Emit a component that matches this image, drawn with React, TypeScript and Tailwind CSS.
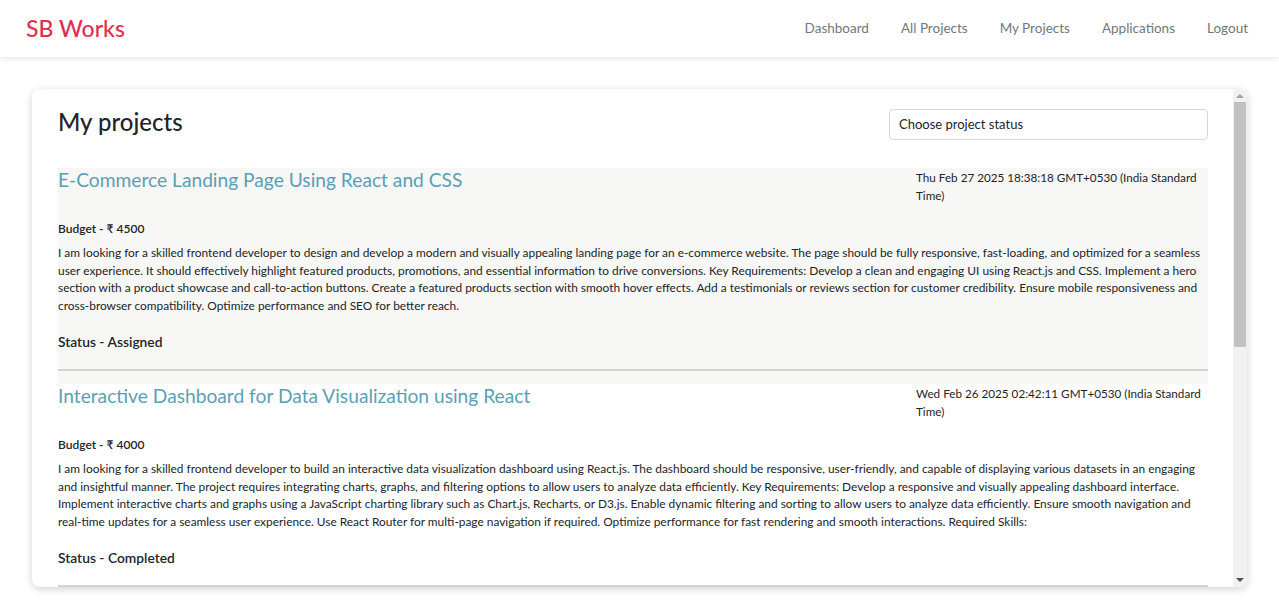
import { useState } from "react";

type Project = {
  id: number;
  title: string;
  date: string;
  budget: number;
  description: string;
  status: string;
};

const projects: Project[] = [
  {
    id: 1,
    title: "E-Commerce Landing Page Using React and CSS",
    date: "Thu Feb 27 2025 18:38:18 GMT+0530 (India Standard Time)",
    budget: 4500,
    description:
      "I am looking for a skilled frontend developer to design and develop a modern and visually appealing landing page for an e-commerce website. The page should be fully responsive, fast-loading, and optimized for a seamless user experience. It should effectively highlight featured products, promotions, and essential information to drive conversions. Key Requirements: Develop a clean and engaging UI using React.js and CSS. Implement a hero section with a product showcase and call-to-action buttons. Create a featured products section with smooth hover effects. Add a testimonials or reviews section for customer credibility. Ensure mobile responsiveness and cross-browser compatibility. Optimize performance and SEO for better reach.",
    status: "Assigned",
  },
  {
    id: 2,
    title: "Interactive Dashboard for Data Visualization using React",
    date: "Wed Feb 26 2025 02:42:11 GMT+0530 (India Standard Time)",
    budget: 4000,
    description:
      "I am looking for a skilled frontend developer to build an interactive data visualization dashboard using React.js. The dashboard should be responsive, user-friendly, and capable of displaying various datasets in an engaging and insightful manner. The project requires integrating charts, graphs, and filtering options to allow users to analyze data efficiently. Key Requirements: Develop a responsive and visually appealing dashboard interface. Implement interactive charts and graphs using a JavaScript charting library such as Chart.js, Recharts, or D3.js. Enable dynamic filtering and sorting to allow users to analyze data efficiently. Ensure smooth navigation and real-time updates for a seamless user experience. Use React Router for multi-page navigation if required. Optimize performance for fast rendering and smooth interactions. Required Skills:",
    status: "Completed",
  },
];

const navLinks = ["Dashboard", "All Projects", "My Projects", "Applications", "Logout"];

export default function App() {
  const [filter, setFilter] = useState("");
  const [hovered, setHovered] = useState<number | null>(1);

  const visible = projects.filter((p) => !filter || p.status === filter);

  return (
    <div className="h-[603px] bg-white font-['Lato','Liberation_Sans',sans-serif] text-[#212529] overflow-hidden">
      {/* Navbar */}
      <nav className="h-[57px] flex items-center justify-between pl-[26px] pr-[31px] bg-white shadow-[0_1px_6px_rgba(0,0,0,0.12)] relative z-10">
        <span className="text-[23px] font-medium text-[#e0304f] leading-none">SB Works</span>
        <div className="flex items-center gap-[32px]">
          {navLinks.map((l) => (
            <a key={l} className="text-[13.5px] text-[#73777b] cursor-pointer">
              {l}
            </a>
          ))}
        </div>
      </nav>

      {/* Card */}
      <div className="mx-[32px] mt-[32px] h-[498px] rounded-lg bg-white shadow-[0_2px_8px_rgba(0,0,0,0.18)] overflow-hidden flex">
        <div className="flex-1 min-w-0 overflow-hidden">
          <div className="pl-[26px] pr-[25px] pt-[17px] pb-[26px]">
            <div className="flex items-start justify-between">
              <h2 className="text-[24px] font-medium leading-[30px] mt-[1px]">My projects</h2>
              <select
                value={filter}
                onChange={(e) => setFilter(e.target.value)}
                className="appearance-none w-[319px] h-[31px] mt-[3px] border border-[#d6d9dc] rounded-[4px] pl-[9px] text-[13px] text-[#212529] bg-white outline-none"
              >
                <option value="">Choose project status</option>
                <option value="Assigned">Assigned</option>
                <option value="Completed">Completed</option>
              </select>
            </div>

            <div className="mt-[28px]">
              {visible.map((p) => (
                <div
                  key={p.id}
                  onMouseEnter={() => setHovered(p.id)}
                  className={`pb-[13px] ${hovered === p.id ? "bg-[#f7f7f5]" : "bg-white"}`}
                >
                  <div className="flex justify-between items-start">
                    <h3 className="text-[19.2px] leading-[24px] text-[#5b9fb5] font-normal">{p.title}</h3>
                    <p className="w-[292px] shrink-0 text-[11.7px] leading-[18px] text-[#212529]">{p.date}</p>
                  </div>
                  <p className="mt-[16px] text-[12px] leading-[18px] font-semibold">Budget - &#8377; {p.budget}</p>
                  <p className="mt-[6px] text-[11.9px] leading-[17.7px] text-[#212529]">{p.description}</p>
                  <p className="mt-[17px] text-[13.8px] leading-[20px] font-semibold">Status - {p.status}</p>
                  <hr className="mt-[17px] border-0 border-t-2 border-[#d3d3d3]" />
                </div>
              ))}
            </div>
          </div>
        </div>

        {/* Scrollbar */}
        <div className="w-[14px] shrink-0 bg-[#f1f1f1] flex flex-col items-center">
          <div className="h-[13px] w-full flex items-center justify-center">
            <svg width="8" height="4" viewBox="0 0 8 4">
              <path d="M0 4 L4 0 L8 4 Z" fill="#a3a3a3" />
            </svg>
          </div>
          <div className="w-[12px] h-[245px] bg-[#c1c1c1]" />
          <div className="flex-1" />
          <div className="h-[14px] w-full flex items-center justify-center">
            <svg width="8" height="4" viewBox="0 0 8 4">
              <path d="M0 0 L8 0 L4 4 Z" fill="#505050" />
            </svg>
          </div>
        </div>
      </div>
    </div>
  );
}
